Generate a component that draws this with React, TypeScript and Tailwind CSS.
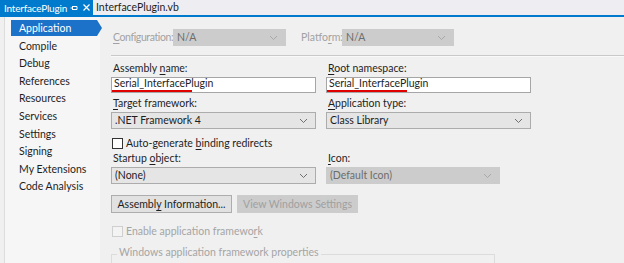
import React from 'react';

const font = { fontFamily: 'Lato, "Noto Sans", sans-serif' };

// label with an access-key underline on one letter
const Ak: React.FC<{ text: string; k: number; className?: string }> = ({ text, k, className }) => (
  <span className={`whitespace-nowrap ${className ?? ''}`}>
    {text.slice(0, k)}
    <span className="underline underline-offset-2">{text[k]}</span>
    {text.slice(k + 1)}
  </span>
);

const Chevron: React.FC<{ color?: string }> = ({ color = '#707070' }) => (
  <svg width="9" height="6" viewBox="0 0 9 6" className="shrink-0">
    <path d="M1 1 L4.5 4.5 L8 1" fill="none" stroke={color} strokeWidth="1" />
  </svg>
);

const Combo: React.FC<{ value: string; disabled?: boolean; className?: string }> = ({ value, disabled, className }) => (
  <div
    className={`flex items-center justify-between h-[17px] px-[3px] pr-[7px] border ${
      disabled ? 'bg-[#cccccc] border-[#cccccc] text-[#6d6d6d]' : 'bg-[#e5e5e5] border-[#acacac] text-[#1e1e1e]'
    } ${className ?? ''}`}
  >
    <span className="leading-none whitespace-nowrap">{value}</span>
    <Chevron color={disabled ? '#a8a8a8' : '#6f6f6f'} />
  </div>
);

const TextBox: React.FC<{ value: string }> = ({ value }) => (
  <div className="relative flex items-center h-[16px] px-[2px] bg-white border border-[#a6a6a6] text-[#1e1e1e]">
    <span className="leading-none whitespace-nowrap -mt-[4px]">{value}</span>
    <div className="absolute left-0 bottom-0 h-[2px] w-[80px] bg-[#e00000]" />
  </div>
);

const Check: React.FC<{ disabled?: boolean }> = ({ disabled }) => (
  <div className={`w-[11px] h-[11px] border ${disabled ? 'border-[#cfcfcf] bg-[#f3f3f3]' : 'border-[#333333] bg-white'}`} />
);

const navItems = ['Compile', 'Debug', 'References', 'Resources', 'Services', 'Settings', 'Signing', 'My Extensions', 'Code Analysis'];

const App: React.FC = () => {
  return (
    <div className="w-[624px] h-[263px] overflow-hidden bg-[#f0f0f0] text-[10.5px] text-[#1e1e1e]" style={font}>
      {/* document tabs */}
      <div className="flex items-end h-[15px] bg-[#eeeef2]">
        <div className="flex items-center h-[15px] w-[93px] bg-[#007acc] text-white pl-[4px] pr-[3px]">
          <span className="leading-none whitespace-nowrap text-[10px] tracking-[-0.2px]">InterfacePlugin</span>
          <svg width="8" height="8" viewBox="0 0 8 8" className="ml-auto shrink-0">
            <path d="M0.5 4 H2.5 M2.5 2 V6 M2.5 2.5 H7 V5.5 H2.5" fill="none" stroke="#ffffff" strokeWidth="1" />
          </svg>
          <svg width="7" height="7" viewBox="0 0 7 7" className="ml-[5px] shrink-0">
            <path d="M0.5 0.5 L6.5 6.5 M6.5 0.5 L0.5 6.5" stroke="#ffffff" strokeWidth="1.2" />
          </svg>
        </div>
        <div className="flex items-center h-[15px] pl-[3px]">
          <span className="leading-none whitespace-nowrap text-[#1e1e1e]">InterfacePlugin.vb</span>
        </div>
      </div>
      <div className="h-[2px] bg-[#007acc]" />

      <div className="flex h-[246px]">
        {/* left navigation */}
        <div className="ml-[4px] w-[96px] h-full bg-[#f6f6f6] border-l border-[#dcdcdc] pt-[3px]">
          <div className="relative ml-[6px] w-[86px] h-[16px] bg-[#1c72c8] text-white flex items-center pl-[8px]">
            <span className="leading-none">Application</span>
            <div className="absolute right-[-5px] top-0 w-0 h-0 border-y-[8px] border-y-transparent border-l-[5px] border-l-[#1c72c8]" />
          </div>
          <div className="flex flex-col pl-[14px] pt-[1px]">
            {navItems.map((n) => (
              <div key={n} className="h-[17.6px] flex items-center leading-none whitespace-nowrap">
                {n}
              </div>
            ))}
          </div>
        </div>

        {/* main page */}
        <div className="flex-1 pl-[11px] pt-[12px]">
          <div className="flex items-center h-[17px] text-[#a2a2a2]">
            <div className="w-[62px] pl-[2px]">
              <Ak text="Configuration:" k={0} className="tracking-[-0.4px]" />
            </div>
            <Combo value="N/A" disabled className="w-[113px]" />
            <div className="w-[56px] pl-[15px]">
              <Ak text="Platform:" k={6} />
            </div>
            <Combo value="N/A" disabled className="w-[112px]" />
          </div>
          <div className="mt-[9px] h-[2px] border-t border-[#c9c9c9] bg-white/60" />

          <div className="grid grid-cols-[205px_205px] gap-x-[10px] mt-[4px]">
            <div className="flex flex-col">
              <Ak text="Assembly name:" k={9} className="h-[15px] ml-[2px] leading-[15px]" />
              <div className="mt-[1px]">
                <TextBox value="Serial_InterfacePlugin" />
              </div>
              <Ak text="Target framework:" k={0} className="h-[15px] mt-[3px] ml-[2px] leading-[15px]" />
              <Combo value=".NET Framework 4" className="mt-[1px]" />
            </div>
            <div className="flex flex-col">
              <Ak text="Root namespace:" k={0} className="h-[15px] ml-[2px] leading-[15px]" />
              <div className="mt-[1px]">
                <TextBox value="Serial_InterfacePlugin" />
              </div>
              <Ak text="Application type:" k={0} className="h-[15px] mt-[3px] ml-[2px] leading-[15px]" />
              <Combo value="Class Library" className="mt-[1px]" />
            </div>
          </div>

          <div className="flex items-center gap-[3px] mt-[8px] ml-[1px] h-[12px]">
            <Check />
            <Ak text="Auto-generate binding redirects" k={14} className="leading-none" />
          </div>

          <div className="grid grid-cols-[205px_174px] gap-x-[10px] mt-[2px]">
            <div className="flex flex-col">
              <Ak text="Startup object:" k={8} className="h-[15px] ml-[2px] leading-[15px]" />
              <Combo value="(None)" className="mt-[1px]" />
            </div>
            <div className="flex flex-col">
              <Ak text="Icon:" k={0} className="h-[15px] ml-[2px] leading-[15px]" />
              <Combo value="(Default Icon)" disabled className="mt-[1px]" />
            </div>
          </div>

          <div className="flex gap-[5px] mt-[11px]">
            <div className="w-[121px] h-[18px] flex items-center justify-center bg-[#e1e1e1] border border-[#adadad]">
              <Ak text="Assembly Information..." k={7} className="leading-none" />
            </div>
            <div className="w-[121px] h-[18px] flex items-center justify-center bg-[#cccccc] border border-[#cccccc] text-[#a0a0a0]">
              <span className="leading-none whitespace-nowrap">View Windows Settings</span>
            </div>
          </div>

          <div className="flex items-center gap-[3px] mt-[12px] ml-[1px] h-[12px] text-[#a5a5a5]">
            <Check disabled />
            <Ak text="Enable application framework" k={26} className="leading-none" />
          </div>

          <div className="relative mt-[17px] w-[384px] h-[20px] border border-[#dcdcdc]">
            <span className="absolute -top-[8px] left-[5px] px-[2px] bg-[#f0f0f0] text-[#a5a5a5] leading-none whitespace-nowrap">
              Windows application framework properties
            </span>
          </div>
        </div>
      </div>
    </div>
  );
};

export default App;
